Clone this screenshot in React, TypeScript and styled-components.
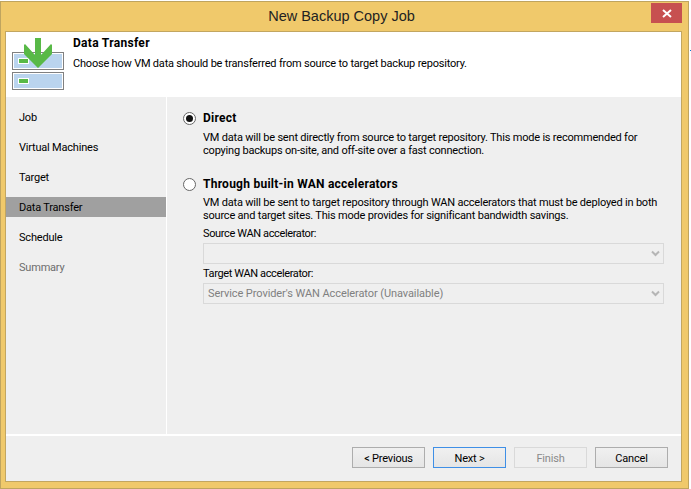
import React from "react";
import styled, { createGlobalStyle } from "styled-components";

const Global = createGlobalStyle`
  html, body { margin: 0; padding: 0; background: #fff; }
  body { font-family: Roboto, "Liberation Sans", Arial, sans-serif; font-size: 11px; letter-spacing: -0.2px; color: #000; }
`;
const Frame = styled.div`
  box-sizing: border-box; width: 689px; height: 488px; margin-top: 1px;
  background: #f0c96b; border: 1px solid #bfa45f;
  display: flex; flex-direction: column; position: relative;
`;
const TitleBar = styled.div`
  height: 29px; flex: none; display: flex; align-items: center; justify-content: center;
  position: relative; font-family: "Liberation Sans", Arial, sans-serif; font-size: 14.5px; letter-spacing: 0; color: #222; padding: 0 6px 1px 0; box-sizing: border-box;
`;
const CloseBtn = styled.div`
  position: absolute; right: 6px; top: 1px; width: 31px; height: 20px; background: #c75050;
  display: flex; align-items: center; justify-content: center;
`;
const Client = styled.div`
  margin: 0 6px 6px 4px; flex: 1; border: 1px solid #c2a660; background: #efefef;
  display: flex; flex-direction: column; min-height: 0;
`;
const Header = styled.div`
  height: 65px; flex: none; background: #fff; display: flex; padding-left: 6px; box-sizing: border-box;
`;
const LogoWrap = styled.div`padding-top: 6px; flex: none; display: flex;`;
const HeaderText = styled.div`padding: 5px 0 0 7px;`;
const HeaderTitle = styled.div`font-weight: 700; font-size: 12px; letter-spacing: 0.3px; line-height: 13px;`;
const HeaderSub = styled.div`margin-top: 7px; line-height: 14px;`;
const Main = styled.div`flex: 1; display: flex; min-height: 0; border-bottom: 2px solid #fff;`;
const Nav = styled.div`
  width: 160px; flex: none; border-right: 1px solid #fff; padding-top: 10px;
  display: flex; flex-direction: column; gap: 10px;
`;
const NavItem = styled.div<{ $active?: boolean; $disabled?: boolean }>`
  height: 20px; line-height: 21px; padding-left: 13px;
  background: ${p => (p.$active ? "#a0a0a0" : "transparent")};
  color: ${p => (p.$disabled ? "#6d6d6d" : "#000")};
`;
const Content = styled.div`flex: 1; padding: 14px 17px 0 16px; display: flex; flex-direction: column;`;
const Option = styled.div`display: flex; align-items: center; gap: 7px; height: 14px;`;
const RadioDot = styled.span<{ $on?: boolean }>`
  box-sizing: border-box; width: 13px; height: 13px; border-radius: 50%; border: 1px solid #666; background: #fff;
  display: flex; align-items: center; justify-content: center; flex: none;
  &::after { content: ""; width: 7px; height: 7px; border-radius: 50%; background: ${p => (p.$on ? "#111" : "transparent")}; }
`;
const OptionLabel = styled.span`font-weight: 700; font-size: 12px; letter-spacing: 0.25px;`;
const Desc = styled.div<{ $top: number }>`margin: ${p => p.$top}px 0 0 20px; line-height: 13px; white-space: nowrap;`;
const Gap = styled.div`height: 20px;`;
const FieldLabel = styled.div<{ $top: number }>`margin: ${p => p.$top}px 0 0 20px; line-height: 13px; letter-spacing: -0.37px;`;
const Select = styled.div`
  box-sizing: border-box; margin: 3px 0 0 20px; width: 461px; height: 21px; border: 1px solid #d9d9d9;
  display: flex; align-items: center; justify-content: space-between; padding: 0 3px 0 4px; color: #808080; letter-spacing: -0.08px;
`;
const Footer = styled.div`
  height: 45px; flex: none; display: flex; justify-content: flex-end; gap: 8px; padding: 11px 13px 0 0; box-sizing: border-box;
`;
const Btn = styled.div<{ $kind?: "focus" | "disabled" }>`
  box-sizing: border-box; width: 73px; height: 21px; display: flex; align-items: center; justify-content: center; padding-top: 1px;
  border: 1px solid ${p => (p.$kind === "focus" ? "#3f8fe6" : p.$kind === "disabled" ? "#d9d9d9" : "#adadad")};
  background: ${p => (p.$kind === "disabled" ? "#efefef" : "linear-gradient(#f0f0f0, #e5e5e5)")};
  color: ${p => (p.$kind === "disabled" ? "#8a8a8a" : "#000")};
`;
const Speck = styled.div`position: absolute; left: 689px; top: 48px; width: 1px; height: 1px; background: #0a78d0;`;

const Chevron = () => (
  <svg width="9" height="7" viewBox="0 0 9 7"><path d="M1 1.5 L4.5 5 L8 1.5" fill="none" stroke="#b5b5b5" strokeWidth="2" /></svg>
);

const Logo = () => (
  <svg width="54" height="54" viewBox="0 0 54 54">
    <rect x="0.5" y="14.5" width="51" height="17" fill="#bad4ee" stroke="#808080" />
    <rect x="1.5" y="15.5" width="49" height="15" fill="#bad4ee" stroke="#fff" />
    <rect x="0.5" y="34.5" width="51" height="17" fill="#bad4ee" stroke="#808080" />
    <rect x="1.5" y="35.5" width="49" height="15" fill="#bad4ee" stroke="#fff" />
    <rect x="6.5" y="20.5" width="10" height="5" fill="#58b947" stroke="#fff" />
    <rect x="6.5" y="40.5" width="10" height="5" fill="#58b947" stroke="#fff" />
    <path d="M23 0 H29 V17 L39 6 L40 7 V16 L26 30 L12 16 V7 L13 6 L23 17 Z" fill="#58b947" />
  </svg>
);

export default function App() {
  return (
    <>
      <Global />
      <Frame>
        <TitleBar>
          New Backup Copy Job
          <CloseBtn>
            <svg width="10" height="9" viewBox="0 0 10 9"><path d="M1 1 L9 8 M9 1 L1 8" stroke="#fff" strokeWidth="2" /></svg>
          </CloseBtn>
        </TitleBar>
        <Client>
          <Header>
            <LogoWrap><Logo /></LogoWrap>
            <HeaderText>
              <HeaderTitle>Data Transfer</HeaderTitle>
              <HeaderSub>Choose how VM data should be transferred from source to target backup repository.</HeaderSub>
            </HeaderText>
          </Header>
          <Main>
            <Nav>
              <NavItem>Job</NavItem>
              <NavItem>Virtual Machines</NavItem>
              <NavItem>Target</NavItem>
              <NavItem $active>Data Transfer</NavItem>
              <NavItem>Schedule</NavItem>
              <NavItem $disabled>Summary</NavItem>
            </Nav>
            <Content>
              <Option><RadioDot $on /><OptionLabel>Direct</OptionLabel></Option>
              <Desc $top={6}>
                VM data will be sent directly from source to target repository. This mode is recommended for<br />
                copying backups on-site, and off-site over a fast connection.
              </Desc>
              <Gap />
              <Option><RadioDot /><OptionLabel>Through built-in WAN accelerators</OptionLabel></Option>
              <Desc $top={5}>
                VM data will be sent to target repository through WAN accelerators that must be deployed in both<br />
                source and target sites. This mode provides for significant bandwidth savings.
              </Desc>
              <FieldLabel $top={5}>Source WAN accelerator:</FieldLabel>
              <Select><span /><Chevron /></Select>
              <FieldLabel $top={3}>Target WAN accelerator:</FieldLabel>
              <Select><span>Service Provider's WAN Accelerator (Unavailable)</span><Chevron /></Select>
            </Content>
          </Main>
          <Footer>
            <Btn>&lt; Previous</Btn>
            <Btn $kind="focus">Next &gt;</Btn>
            <Btn $kind="disabled">Finish</Btn>
            <Btn>Cancel</Btn>
          </Footer>
        </Client>
        <Speck />
      </Frame>
    </>
  );
}
